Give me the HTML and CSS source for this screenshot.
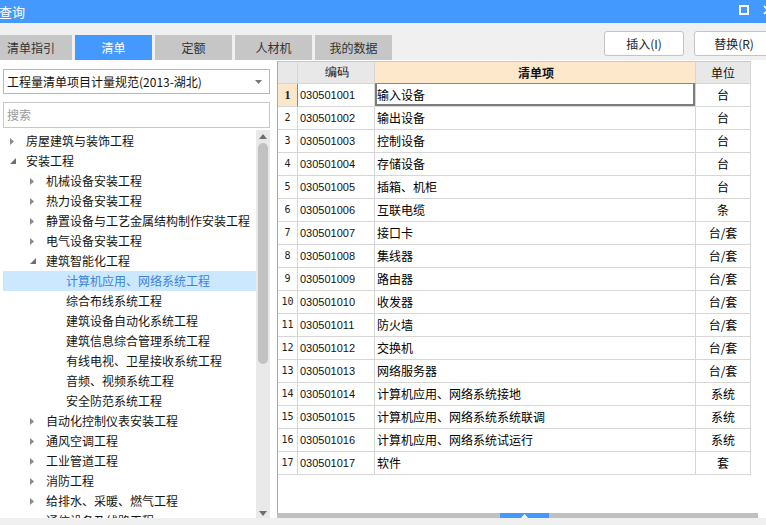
FILE: index.html
```html
<!DOCTYPE html>
<html lang="zh">
<head>
<meta charset="utf-8">
<title>查询</title>
<link rel="stylesheet" href="styles.css">
</head>
<body>
<div class="window">
  <div class="titlebar">
    <span class="title">查询</span>
    <svg class="tb-icon tb-max" width="10" height="10" viewBox="0 0 10 10"><rect x="1" y="1" width="8" height="8" fill="none" stroke="#fff" stroke-width="2"/></svg>
    <svg class="tb-icon tb-close" width="10" height="10" viewBox="0 0 10 10"><path d="M1 1L9 9M9 1L1 9" stroke="#fff" stroke-width="1.6"/></svg>
  </div>
  <div class="toolbar">
    <div class="tabs">
      <div class="tab first">清单指引</div>
      <div class="tab active">清单</div>
      <div class="tab">定额</div>
      <div class="tab">人材机</div>
      <div class="tab">我的数据</div>
    </div>
    <div class="buttons">
      <button class="btn">插入(I)</button>
      <button class="btn">替换(R)</button>
    </div>
  </div>
  <div class="main">
    <div class="left">
      <div class="select">
        <span>工程量清单项目计量规范(2013-湖北)</span>
        <svg class="caret" width="7" height="4" viewBox="0 0 7 4"><path d="M0 0H7L3.5 4Z" fill="#777"/></svg>
      </div>
      <div class="search">搜索</div>
      <div class="tree-wrap">
        <div class="tree">
          <div class="node l0"><span class="arr"><svg width="4" height="7" viewBox="0 0 4 7"><path d="M0 0L4 3.5L0 7Z" fill="#8a8a8a"/></svg></span>房屋建筑与装饰工程</div>
          <div class="node l0"><span class="arr"><svg width="6" height="6" viewBox="0 0 6 6"><path d="M6 0V6H0Z" fill="#6e6e6e"/></svg></span>安装工程</div>
          <div class="node l1"><span class="arr"><svg width="4" height="7" viewBox="0 0 4 7"><path d="M0 0L4 3.5L0 7Z" fill="#8a8a8a"/></svg></span>机械设备安装工程</div>
          <div class="node l1"><span class="arr"><svg width="4" height="7" viewBox="0 0 4 7"><path d="M0 0L4 3.5L0 7Z" fill="#8a8a8a"/></svg></span>热力设备安装工程</div>
          <div class="node l1"><span class="arr"><svg width="4" height="7" viewBox="0 0 4 7"><path d="M0 0L4 3.5L0 7Z" fill="#8a8a8a"/></svg></span>静置设备与工艺金属结构制作安装工程</div>
          <div class="node l1"><span class="arr"><svg width="4" height="7" viewBox="0 0 4 7"><path d="M0 0L4 3.5L0 7Z" fill="#8a8a8a"/></svg></span>电气设备安装工程</div>
          <div class="node l1"><span class="arr"><svg width="6" height="6" viewBox="0 0 6 6"><path d="M6 0V6H0Z" fill="#6e6e6e"/></svg></span>建筑智能化工程</div>
          <div class="node l2 selected"><span class="arr"></span>计算机应用、网络系统工程</div>
          <div class="node l2"><span class="arr"></span>综合布线系统工程</div>
          <div class="node l2"><span class="arr"></span>建筑设备自动化系统工程</div>
          <div class="node l2"><span class="arr"></span>建筑信息综合管理系统工程</div>
          <div class="node l2"><span class="arr"></span>有线电视、卫星接收系统工程</div>
          <div class="node l2"><span class="arr"></span>音频、视频系统工程</div>
          <div class="node l2"><span class="arr"></span>安全防范系统工程</div>
          <div class="node l1"><span class="arr"><svg width="4" height="7" viewBox="0 0 4 7"><path d="M0 0L4 3.5L0 7Z" fill="#8a8a8a"/></svg></span>自动化控制仪表安装工程</div>
          <div class="node l1"><span class="arr"><svg width="4" height="7" viewBox="0 0 4 7"><path d="M0 0L4 3.5L0 7Z" fill="#8a8a8a"/></svg></span>通风空调工程</div>
          <div class="node l1"><span class="arr"><svg width="4" height="7" viewBox="0 0 4 7"><path d="M0 0L4 3.5L0 7Z" fill="#8a8a8a"/></svg></span>工业管道工程</div>
          <div class="node l1"><span class="arr"><svg width="4" height="7" viewBox="0 0 4 7"><path d="M0 0L4 3.5L0 7Z" fill="#8a8a8a"/></svg></span>消防工程</div>
          <div class="node l1"><span class="arr"><svg width="4" height="7" viewBox="0 0 4 7"><path d="M0 0L4 3.5L0 7Z" fill="#8a8a8a"/></svg></span>给排水、采暖、燃气工程</div>
          <div class="node l1"><span class="arr"><svg width="4" height="7" viewBox="0 0 4 7"><path d="M0 0L4 3.5L0 7Z" fill="#8a8a8a"/></svg></span>通信设备及线路工程</div>
        </div>
        <div class="vscroll">
          <svg class="sarrow" width="8" height="5" viewBox="0 0 8 5"><path d="M0 5L4 0L8 5Z" fill="#6f6f6f"/></svg>
          <div class="thumb"></div>
          <div class="vspace"></div>
          <svg class="sarrow" width="8" height="5" viewBox="0 0 8 5"><path d="M0 0L8 0L4 5Z" fill="#6f6f6f"/></svg>
        </div>
      </div>
    </div>
    <div class="right">
      <div class="grid">
        <div class="row head">
          <div class="c num"></div>
          <div class="c code">编码</div>
          <div class="c item active-col">清单项</div>
          <div class="c unit">单位</div>
        </div>
        <div class="row cur"><div class="c num">1</div><div class="c code">030501001</div><div class="c item focus">输入设备</div><div class="c unit">台</div></div>
        <div class="row"><div class="c num">2</div><div class="c code">030501002</div><div class="c item">输出设备</div><div class="c unit">台</div></div>
        <div class="row"><div class="c num">3</div><div class="c code">030501003</div><div class="c item">控制设备</div><div class="c unit">台</div></div>
        <div class="row"><div class="c num">4</div><div class="c code">030501004</div><div class="c item">存储设备</div><div class="c unit">台</div></div>
        <div class="row"><div class="c num">5</div><div class="c code">030501005</div><div class="c item">插箱、机柜</div><div class="c unit">台</div></div>
        <div class="row"><div class="c num">6</div><div class="c code">030501006</div><div class="c item">互联电缆</div><div class="c unit">条</div></div>
        <div class="row"><div class="c num">7</div><div class="c code">030501007</div><div class="c item">接口卡</div><div class="c unit">台/套</div></div>
        <div class="row"><div class="c num">8</div><div class="c code">030501008</div><div class="c item">集线器</div><div class="c unit">台/套</div></div>
        <div class="row"><div class="c num">9</div><div class="c code">030501009</div><div class="c item">路由器</div><div class="c unit">台/套</div></div>
        <div class="row"><div class="c num">10</div><div class="c code">030501010</div><div class="c item">收发器</div><div class="c unit">台/套</div></div>
        <div class="row"><div class="c num">11</div><div class="c code">030501011</div><div class="c item">防火墙</div><div class="c unit">台/套</div></div>
        <div class="row"><div class="c num">12</div><div class="c code">030501012</div><div class="c item">交换机</div><div class="c unit">台/套</div></div>
        <div class="row"><div class="c num">13</div><div class="c code">030501013</div><div class="c item">网络服务器</div><div class="c unit">台/套</div></div>
        <div class="row"><div class="c num">14</div><div class="c code">030501014</div><div class="c item">计算机应用、网络系统接地</div><div class="c unit">系统</div></div>
        <div class="row"><div class="c num">15</div><div class="c code">030501015</div><div class="c item">计算机应用、网络系统系统联调</div><div class="c unit">系统</div></div>
        <div class="row"><div class="c num">16</div><div class="c code">030501016</div><div class="c item">计算机应用、网络系统试运行</div><div class="c unit">系统</div></div>
        <div class="row"><div class="c num">17</div><div class="c code">030501017</div><div class="c item">软件</div><div class="c unit">套</div></div>
      </div>
      <div class="hbar">
        <div class="hbar-handle"><svg width="7" height="4" viewBox="0 0 7 4"><path d="M0 4L3.5 0L7 4Z" fill="#fff"/></svg></div>
      </div>
    </div>
  </div>
  <div class="status"></div>
</div>
</body>
</html>
```

FILE: styles.css
```css
* { box-sizing: border-box; }

html, body {
  margin: 0;
  padding: 0;
}

body {
  width: 766px;
  height: 525px;
  overflow: hidden;
  background: #f0f0f0;
  font-family: "Noto Sans CJK SC", "Noto Sans", sans-serif;
  font-size: 12px;
  color: #111;
}

.window {
  width: 766px;
  height: 525px;
  display: flex;
  flex-direction: column;
  overflow: hidden;
}

/* title bar */
.titlebar {
  height: 23px;
  flex: none;
  background: #4499ff;
  display: flex;
  align-items: center;
  color: #fff;
  overflow: hidden;
}

.title {
  font-size: 13px;
  line-height: 23px;
  margin-left: -1px;
}

.tb-icon { flex: none; display: block; }
.tb-max { margin-left: auto; margin-top: -3px; }
.tb-close { margin-left: 14px; margin-right: -7px; margin-top: -3px; }

/* toolbar */
.toolbar {
  height: 37px;
  flex: none;
  display: flex;
  align-items: flex-end;
  overflow: hidden;
}

.tabs {
  display: flex;
  gap: 3px;
}

.tab {
  width: 77px;
  height: 25px;
  background: #c6c6c6;
  color: #333;
  font-size: 12px;
  line-height: 25px;
  text-align: center;
}

.tab.first { width: 72px; text-indent: -10px; }

.tab.active {
  background: #4499ff;
  color: #fff;
}

.buttons {
  margin-left: auto;
  align-self: flex-start;
  margin-top: 8px;
  margin-right: -8px;
  display: flex;
  gap: 10px;
}

.btn {
  width: 80px;
  height: 25px;
  background: #fff;
  border: 1px solid #c4c4c4;
  border-radius: 3px;
  font-family: "Noto Sans CJK SC", "Noto Sans", sans-serif;
  font-size: 12px;
  color: #222;
  padding: 0;
}

/* main */
.main {
  flex: 1;
  display: flex;
  min-height: 0;
}

.left {
  width: 277px;
  flex: none;
  background: #fff;
  padding: 9px 7px 0 3px;
  display: flex;
  flex-direction: column;
  min-height: 0;
}

.select {
  height: 25px;
  border: 1px solid #b8b8b8;
  display: flex;
  align-items: center;
  padding: 0 7px 0 3px;
  font-size: 12px;
  color: #111;
}

.select .caret { margin-left: auto; }

.search {
  margin-top: 8px;
  height: 26px;
  border: 1px solid #c8c8c8;
  padding-left: 3px;
  line-height: 24px;
  color: #9a9a9a;
  font-size: 12px;
}

.tree-wrap {
  flex: 1;
  display: flex;
  min-height: 0;
  margin-top: 2px;
  overflow: hidden;
}

.tree {
  width: 253px;
  flex: none;
  padding-top: 1px;
  overflow: hidden;
}

.node {
  height: 20px;
  line-height: 20px;
  display: flex;
  align-items: center;
  white-space: nowrap;
  color: #141414;
  font-size: 12px;
}

.node.l1 { padding-left: 20px; }
.node.l2 { padding-left: 40px; }

.node.selected {
  background: #cce8ff;
  color: #3b83dc;
}

.arr {
  width: 23px;
  flex: none;
  display: flex;
  align-items: center;
  padding-left: 7px;
}

.arr svg { display: block; }

.vscroll {
  width: 14px;
  flex: none;
  background: #e9e9e9;
  display: flex;
  flex-direction: column;
  align-items: center;
  padding: 4px 0 2px;
}

.sarrow { display: block; flex: none; }

.thumb {
  width: 10px;
  height: 221px;
  margin-top: 4px;
  background: #c2c2c2;
  border-radius: 5px;
  flex: none;
}

.vspace { flex: 1; }

/* right grid */
.right {
  flex: 1;
  background: #fff;
  padding-top: 1px;
  display: flex;
  flex-direction: column;
  min-width: 0;
}

.grid {
  flex: 1;
  width: 474px;
  border-left: 1px solid #a9a9a9;
}

.row {
  display: grid;
  grid-template-columns: 20px 77px 321px 55px;
  height: 23px;
}

.c {
  border-right: 1px solid #d6d6d6;
  border-bottom: 1px solid #d6d6d6;
  height: 23px;
  line-height: 22px;
  white-space: nowrap;
  overflow: hidden;
}

.row.head { height: 23px; }
.row.head .c {
  background: #e8e8e8;
  border-top: 1px solid #c8c8c8;
  text-align: center;
  font-size: 12px;
  color: #111;
  line-height: 21px;
}

.row.head .c.active-col {
  background: #fde8cc;
  font-weight: bold;
  border-bottom: 1px solid #3c97ff;
}

.c.num {
  text-align: center;
  font-family: "DejaVu Sans Mono", monospace;
  font-size: 10px;
  color: #222;
}

.row.cur .c.num {
  background: #fde7ca;
  font-weight: bold;
  border-right-color: #3c97ff;
  font-family: "Liberation Serif", serif;
  font-size: 12px;
}

.c.code {
  font-family: "Liberation Sans", sans-serif;
  font-size: 11px;
  padding-left: 2px;
  color: #111;
}

.c.item {
  padding-left: 2px;
  font-size: 12px;
  color: #000;
}

.c.item.focus {
  box-shadow: inset 2px 0 #7d7d7d, inset -2px 0 #7d7d7d, inset 0 -2px #7d7d7d;
}

.c.unit {
  text-align: center;
  font-size: 12px;
  color: #000;
}

.hbar {
  height: 5px;
  flex: none;
  margin-right: 8px;
  background: #c0c0c0;
  display: flex;
  padding-left: 223px;
}

.hbar-handle {
  width: 49px;
  height: 5px;
  background: #4499ff;
  display: flex;
  justify-content: center;
  align-items: center;
}

.hbar-handle svg { display: block; }

.status {
  height: 7px;
  flex: none;
  background: #f0f0f0;
}
```
